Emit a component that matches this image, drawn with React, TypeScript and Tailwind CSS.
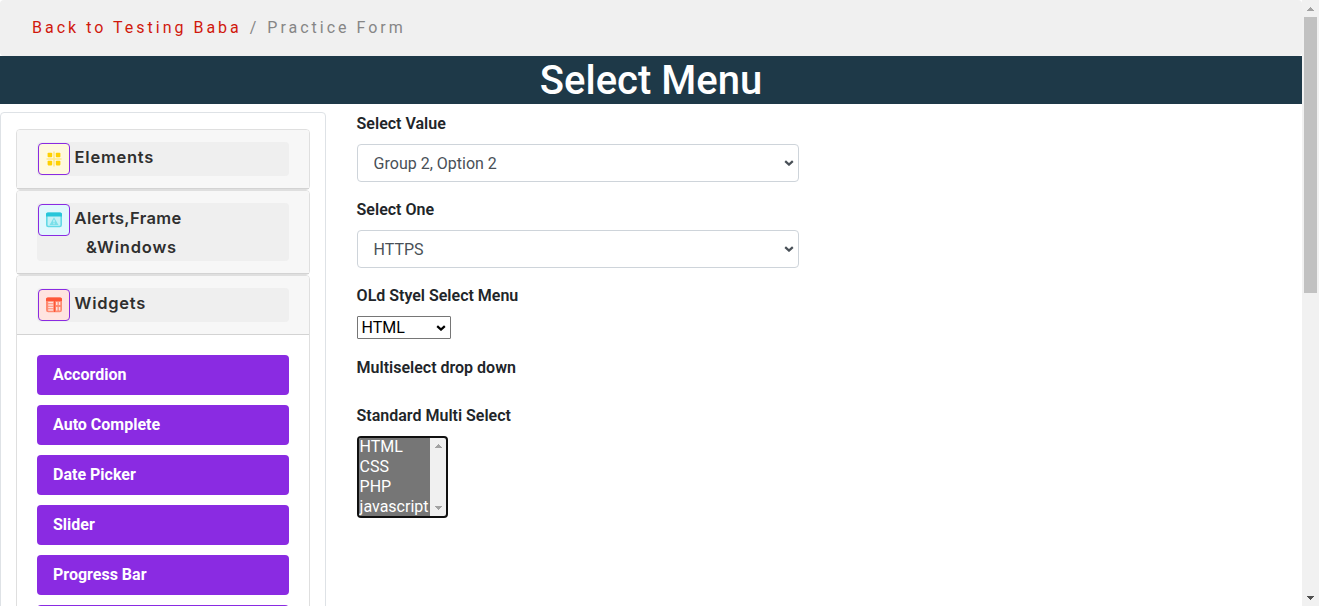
import type { ReactNode } from "react";

const links = ["Accordion", "Auto Complete", "Date Picker", "Slider", "Progress Bar"];

function ElementsIcon() {
  return (
    <svg width="16" height="16" viewBox="0 0 16 16">
      <path d="M8 .5v15M.5 8h15" stroke="#ffe88a" strokeWidth="1.6" />
      <g fill="#ffd000">
        <rect x="1.6" y="1.7" width="4.6" height="4.6" rx="0.8" />
        <rect x="9.8" y="1.7" width="4.6" height="4.6" rx="0.8" />
        <rect x="1.6" y="9.8" width="4.6" height="4.6" rx="0.8" />
        <rect x="9.8" y="9.8" width="4.6" height="4.6" rx="0.8" />
      </g>
    </svg>
  );
}

function AlertsIcon() {
  return (
    <svg width="16" height="16" viewBox="0 0 16 16">
      <rect x="0.8" y="1.2" width="14.4" height="13.3" rx="1.5" fill="#c5f1f6" stroke="#63d9e6" strokeWidth="1.6" />
      <path d="M0 4.5V2Q0 .5 1.5.5h13Q16 .5 16 2v2.5z" fill="#26c6da" />
      <path d="M8 5.3 12.5 13h-9z" fill="#7adfe9" />
      <path d="M8 7.8v2.6M8 11.2v1" stroke="#e0f8fb" strokeWidth="1" />
    </svg>
  );
}

function WidgetsIcon() {
  return (
    <svg width="16" height="16" viewBox="0 0 16 16">
      <rect x="0.8" y="1.2" width="14.4" height="13.3" rx="1.5" fill="#ff8a70" stroke="#ff8a70" strokeWidth="1.6" />
      <path d="M0 4V2Q0 .5 1.5.5h13Q16 .5 16 2v2z" fill="#ff5638" />
      <path d="M8.6 4v11" stroke="#ff5638" strokeWidth="1.2" />
      <path d="M2.2 5.5h5M2.2 8h5M2.2 10.5h5M2.2 13h5" stroke="#ffe0da" strokeWidth="1.3" />
      <path d="M10 5h1.5v3H10zM12.8 5h1.5v3h-1.5zM10 10h1.5v3.5H10zM12.8 10h1.5v3.5h-1.5z" fill="#ffe0da" />
    </svg>
  );
}

function Group({ icon, tint, title, children }: { icon: ReactNode; tint: string; title: ReactNode; children?: ReactNode }) {
  return (
    <div className="rounded border border-[#dfdfdf] bg-white">
      <div className="rounded-t-[3px] border-b border-[#d3d3d3] bg-[#f7f7f7] px-5 py-3">
        <div className="flex min-h-[34px] items-start rounded bg-[#efefef] pl-px font-['Inter'] text-[16.5px] font-semibold text-[#2f2f2f]">
          <span className={`mt-px flex size-8 shrink-0 items-center justify-center rounded border border-[#8a2be2] ${tint}`}>{icon}</span>
          <div className="-mb-px pl-[4.6px] pt-px leading-[29px]">{title}</div>
        </div>
      </div>
      {children}
    </div>
  );
}

function Triangle({ up, color, size }: { up?: boolean; color: string; size: number }) {
  return (
    <svg width={size} height="4" viewBox="0 0 8 4" preserveAspectRatio="none" shapeRendering="crispEdges">
      <path d={up ? "M0 4 4 0 8 4z" : "M0 0h8L4 4z"} fill={color} />
    </svg>
  );
}

function Label({ children }: { children: ReactNode }) {
  return <div className="mb-2 font-semibold leading-6">{children}</div>;
}

function Select({ value, small }: { value: string; small?: boolean }) {
  const look = small
    ? "h-[23px] w-[94px] rounded-[1px] border-[#767676] pl-1 leading-5 text-black"
    : "h-[38px] w-[442px] rounded border-[#ced4da] pb-[5px] pl-4 pt-[7px] text-[#495057]";
  return (
    <div className="grid w-fit items-center justify-items-end">
      <select className={`col-start-1 row-start-1 block appearance-none border bg-white outline-none ${look}`}>
        <option>{value}</option>
      </select>
      <svg
        className={`pointer-events-none col-start-1 row-start-1 mr-[5px] ${small ? "text-black" : "text-[#495057]"}`}
        width="10"
        height="6"
        viewBox="0 0 10 6"
      >
        <path d="M1.2 1.1 5 4.6 8.8 1.1" fill="none" stroke="currentColor" strokeWidth="2.2" />
      </svg>
    </div>
  );
}

export default function App() {
  return (
    <div className="flex h-[606px] w-[1319px] overflow-hidden bg-white font-['Roboto',sans-serif] text-[16px] leading-6 text-[#212529]">
      <div className="flex w-[1302px] flex-col">
        <nav className="flex h-14 shrink-0 items-center rounded bg-[#f0f0f0] px-8 tracking-[3px]">
          <span className="whitespace-pre text-[#d0180c]">Back to Testing Baba</span>
          <span className="whitespace-pre pl-px text-[#868686]"> /</span>
          <span className="whitespace-pre pl-px text-[#868686]"> Practice Form</span>
        </nav>
        <h1 className="h-12 shrink-0 bg-[#1e3948] pt-px text-center text-[40px] font-medium leading-[48px] text-white">Select Menu</h1>

        <div className="flex min-h-0 flex-1 pt-2">
          <aside className="h-[900px] w-[326px] shrink-0 rounded border border-[#dee2e6] px-[15px] pt-4">
            <Group icon={<ElementsIcon />} tint="bg-[#fff9dd]" title={<div className="tracking-[0.75px]">Elements</div>} />
            <Group
              icon={<AlertsIcon />}
              tint="bg-[#e0f8fd]"
              title={
                <>
                  <div className="tracking-[0.35px]">Alerts,Frame</div>
                  <div className="pl-[11.4px] tracking-[0.8px]">&amp;Windows</div>
                </>
              }
            />
            <Group icon={<WidgetsIcon />} tint="bg-[#ffe4e0]" title={<div className="tracking-[0.75px]">Widgets</div>}>
              <div className="flex flex-col gap-2.5 p-5">
                {links.map((name) => (
                  <a key={name} className="h-10 rounded bg-[#8a2be2] px-4 font-bold leading-[39px] text-white">
                    {name}
                  </a>
                ))}
                <a className="h-10 rounded bg-[#8a2be2]" />
              </div>
            </Group>
          </aside>

          <main className="ml-[30.6px]">
            <Label>Select Value</Label>
            <Select value="Group 2, Option 2" />
            <div className="mt-4">
              <Label>Select One</Label>
              <Select value="HTTPS" />
            </div>
            <div className="mt-4">
              <Label>OLd Styel Select Menu</Label>
              <Select value="HTML" small />
            </div>
            <div className="mt-[17px]">
              <Label>Multiselect drop down</Label>
            </div>
            <div className="mt-6">
              <Label>Standard Multi Select</Label>
              <div className="flex h-[82px] w-[91px] overflow-hidden rounded border-2 border-[#101010] bg-[#f0f0f0]">
                <div className="-mt-px w-[71px] bg-[#767676] pl-px leading-5 text-white">
                  <div>HTML</div>
                  <div>CSS</div>
                  <div>PHP</div>
                  <div>javascript</div>
                </div>
                <div className="flex flex-1 flex-col items-center justify-between py-[6px]">
                  <Triangle up color="#a3a3a3" size={8} />
                  <Triangle color="#a3a3a3" size={8} />
                </div>
              </div>
            </div>
          </main>
        </div>
      </div>

      <div className="flex w-[17px] flex-col items-center bg-[#f1f1f1]">
        <div className="flex h-[17px] w-full items-center justify-center pt-px">
          <Triangle up color="#a3a3a3" size={7} />
        </div>
        <div className="h-[276px] w-[13px] bg-[#c1c1c1]" />
        <div className="mt-auto flex h-[17px] w-full items-center justify-center">
          <Triangle color="#505050" size={7} />
        </div>
      </div>
    </div>
  );
}
